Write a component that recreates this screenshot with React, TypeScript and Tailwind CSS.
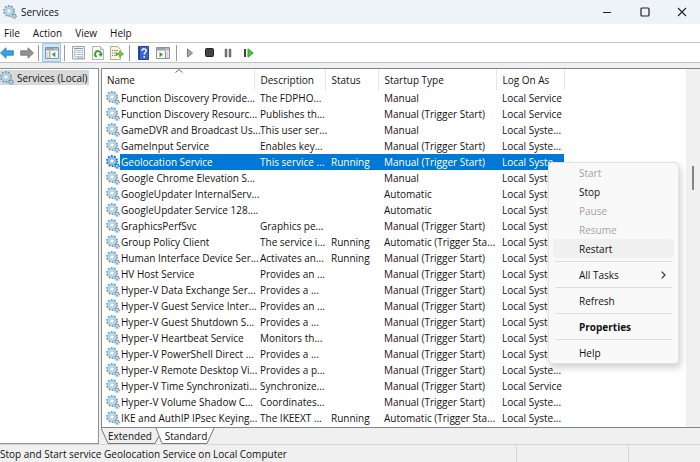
import { ReactNode } from "react";

type Service = {
  name: string;
  description?: string;
  running?: boolean;
  startup: string;
  logOn: string;
};

const TRIGGER = "Manual (Trigger Start)";
const AUTO_TRIGGER = "Automatic (Trigger Sta...";
const SYSTEM = "Local Syste...";
const LOCAL = "Local Service";

const services: Service[] = [
  { name: "Function Discovery Provide...", description: "The FDPHO...", startup: "Manual", logOn: LOCAL },
  { name: "Function Discovery Resourc...", description: "Publishes th...", startup: TRIGGER, logOn: LOCAL },
  { name: "GameDVR and Broadcast Us...", description: "This user ser...", startup: "Manual", logOn: SYSTEM },
  { name: "GameInput Service", description: "Enables key...", startup: TRIGGER, logOn: SYSTEM },
  { name: "Geolocation Service", description: "This service ...", running: true, startup: TRIGGER, logOn: SYSTEM },
  { name: "Google Chrome Elevation S...", startup: "Manual", logOn: SYSTEM },
  { name: "GoogleUpdater InternalServ...", startup: "Automatic", logOn: SYSTEM },
  { name: "GoogleUpdater Service 128....", startup: "Automatic", logOn: SYSTEM },
  { name: "GraphicsPerfSvc", description: "Graphics pe...", startup: TRIGGER, logOn: SYSTEM },
  { name: "Group Policy Client", description: "The service i...", running: true, startup: AUTO_TRIGGER, logOn: SYSTEM },
  { name: "Human Interface Device Ser...", description: "Activates an...", running: true, startup: TRIGGER, logOn: SYSTEM },
  { name: "HV Host Service", description: "Provides an ...", startup: TRIGGER, logOn: SYSTEM },
  { name: "Hyper-V Data Exchange Ser...", description: "Provides a ...", startup: TRIGGER, logOn: SYSTEM },
  { name: "Hyper-V Guest Service Inter...", description: "Provides an ...", startup: TRIGGER, logOn: SYSTEM },
  { name: "Hyper-V Guest Shutdown S...", description: "Provides a ...", startup: TRIGGER, logOn: SYSTEM },
  { name: "Hyper-V Heartbeat Service", description: "Monitors th...", startup: TRIGGER, logOn: SYSTEM },
  { name: "Hyper-V PowerShell Direct ...", description: "Provides a ...", startup: TRIGGER, logOn: SYSTEM },
  { name: "Hyper-V Remote Desktop Vi...", description: "Provides a p...", startup: TRIGGER, logOn: SYSTEM },
  { name: "Hyper-V Time Synchronizati...", description: "Synchronize...", startup: TRIGGER, logOn: LOCAL },
  { name: "Hyper-V Volume Shadow C...", description: "Coordinates...", startup: TRIGGER, logOn: SYSTEM },
  { name: "IKE and AuthIP IPsec Keying...", description: "The IKEEXT ...", running: true, startup: AUTO_TRIGGER, logOn: SYSTEM },
];

const SELECTED = "Geolocation Service";

function GearIcon({ selected = false }: { selected?: boolean }) {
  const rim = selected ? "#0f6fc0" : "#7198b4";
  const face = selected ? "#8cc4f0" : "#b9dcf0";
  return (
    <svg viewBox="0 0 14 14" className="block size-[14px] shrink-0">
      <circle cx="6" cy="6" r="5" fill="none" stroke={rim} strokeWidth="2" strokeDasharray="1.6 1.54" />
      <circle cx="6" cy="6" r="3.6" fill="none" stroke={face} strokeWidth="2" />
      <circle cx="6" cy="6" r="4.5" fill="none" stroke={rim} strokeWidth="0.5" />
      <circle cx="6" cy="6" r="2.3" fill="#fff" stroke={rim} strokeWidth="0.6" />
      <circle cx="11" cy="11" r="2.3" fill="none" stroke={rim} strokeWidth="1.2" strokeDasharray="1 0.8" />
      <circle cx="11" cy="11" r="1.5" fill="#e6f2f9" stroke={rim} strokeWidth="0.9" />
    </svg>
  );
}

function Arrow({ left = false }: { left?: boolean }) {
  return (
    <svg viewBox="0 0 14 12" className="block h-3 w-[14px]">
      {left ? (
        <path d="M.5 6 6 .8v3h7.3v4.4H6v3z" fill="#36a3e6" stroke="#1c78b8" strokeWidth=".8" />
      ) : (
        <path d="M13.5 6 8 .8v3H.7v4.4H8v3z" fill="#929292" stroke="#707070" strokeWidth=".8" />
      )}
    </svg>
  );
}

function PaneIcon({ right = false }: { right?: boolean }) {
  return (
    <svg viewBox="0 0 14 12" className="block h-3 w-[14px]">
      <path d="M.5.5h13v11H.5z" fill="#f8f8f8" stroke="#8b9299" />
      <path d="M1 1h12v2.5H1z" fill="#9ba3ab" />
      <path d="M9.5 2h1M11.5 2h1" stroke="#fff" />
      {right ? (
        <>
          <path d="M9.5 4v7.5" stroke="#8b9299" />
          <path d="M3.5 5v5.2L7 7.6z" fill="#35a52b" />
          <path d="M10.5 6h2M10.5 8h2M10.5 10h2" stroke="#9ba3ab" strokeWidth=".8" />
        </>
      ) : (
        <>
          <path d="M4.8 4v7.5" stroke="#8b9299" />
          <path d="M10.3 5v5.2L6.8 7.6z" fill="#35a52b" />
          <path d="M1.5 6h2M1.5 8h2M1.5 10h2" stroke="#9ba3ab" strokeWidth=".8" />
        </>
      )}
    </svg>
  );
}

function PropertiesIcon() {
  return (
    <svg viewBox="0 0 13 14" className="block h-[14px] w-[13px]">
      <path d="M.5.5h12v12.500H.5z" fill="#eef1f3" stroke="#9fa6ab" />
      <path d="M2 2.500h9" stroke="#7d9db3" />
      <path d="M2.500 4.500h8v6h-8z" fill="#fff" stroke="#a7b4bd" strokeWidth=".7" />
      <path d="M3.500 6.200h1M3.500 8.500h1" stroke="#3a9cd4" />
      <path d="M5.500 6.200h4M5.500 8.500h4" stroke="#8c9aa5" strokeWidth=".8" />
      <path d="M5 12h2.500M8.500 12H11" stroke="#5f9fca" />
    </svg>
  );
}

function RefreshIcon() {
  return (
    <svg viewBox="0 0 12 14" className="block h-[14px] w-3">
      <path d="M.5.5h8l3 3v10H.5z" fill="#fafafa" stroke="#b3b3b3" />
      <path d="M8.5.5v3h3" fill="#e9e9e9" stroke="#b3b3b3" />
      <path d="M4.800 10.800A3 3 0 1 1 9 8.200" fill="none" stroke="#34a52f" strokeWidth="1.800" />
      <path d="M10.900 7.600 9 11 6.400 8.300z" fill="#34a52f" />
    </svg>
  );
}

function ExportIcon() {
  return (
    <svg viewBox="0 0 14 14" className="block size-[14px]">
      <path d="M.5.5h7l3 3v10H.5z" fill="#fbf6dc" stroke="#b7af8b" />
      <path d="M2 4.5h1M2 7h1M2 9.5h1" stroke="#85785a" />
      <path d="M4 4.5h4M4 7h3M4 9.5h3" stroke="#a29c86" />
      <path d="M6 7h3.5V4.8L13.7 8l-4.2 3.2V9H6z" fill="#6cc943" stroke="#43982b" strokeWidth=".5" />
    </svg>
  );
}

function HelpIcon() {
  return (
    <svg viewBox="0 0 11 14" className="block h-[14px] w-[11px]">
      <path d="M.5.5h10v13H.5z" fill="#3d64cf" stroke="#2447a5" />
      <path d="M1.5 1v12" stroke="#243f90" />
      <path d="M4 5c0-3 4.600-2.800 4.200 0C8 6.500 6.200 6.600 6.200 8.500M6.200 10v1.700" fill="none" stroke="#fff" strokeWidth="1.400" />
    </svg>
  );
}

function ToolButton({ label, className = "w-5", children }: { label: string; className?: string; children: ReactNode }) {
  return (
    <button aria-label={label} className={`flex h-[19px] shrink-0 items-center justify-center ${className}`}>
      {children}
    </button>
  );
}

function Divider() {
  return <span className="mx-[3px] h-4 w-px shrink-0 bg-[#999]" />;
}

function TitleBar() {
  return (
    <header className="flex h-6 items-center bg-[#eef3f9]">
      <div className="flex flex-1 items-center gap-1 pl-[3px]">
        <GearIcon />
        <h1>Services</h1>
      </div>
      <button aria-label="Minimize" className="flex h-6 w-[38px] items-center justify-center">
        <svg viewBox="0 0 10 10" className="size-[10px]"><path d="M1 5.500h8" stroke="#222" /></svg>
      </button>
      <button aria-label="Maximize" className="flex h-6 w-[38px] items-center justify-center">
        <svg viewBox="0 0 10 10" className="size-[10px]"><rect x="1" y="1" width="8" height="8" rx="1" fill="none" stroke="#222" strokeWidth="1.200" /></svg>
      </button>
      <button aria-label="Close" className="flex h-6 w-9 items-center justify-center">
        <svg viewBox="0 0 10 10" className="size-[10px]"><path d="m1 1 8 8M9 1 1 9" stroke="#222" strokeWidth="1.100" /></svg>
      </button>
    </header>
  );
}

function Toolbar() {
  return (
    <div className="flex h-[21px] items-center border-y border-[#c4c4c4] bg-white">
      <ToolButton label="Back" className="w-[14px]"><Arrow left /></ToolButton>
      <ToolButton label="Forward" className="ml-1 w-[17px]"><Arrow /></ToolButton>
      <Divider />
      <ToolButton label="Show/Hide Console Tree" className="w-[19px] rounded-[1px] border border-[#90c8f6] bg-[#cce8ff]"><PaneIcon /></ToolButton>
      <Divider />
      <ToolButton label="Properties"><PropertiesIcon /></ToolButton>
      <ToolButton label="Refresh"><RefreshIcon /></ToolButton>
      <ToolButton label="Export List" className="w-[18px]"><ExportIcon /></ToolButton>
      <Divider />
      <ToolButton label="Help"><HelpIcon /></ToolButton>
      <ToolButton label="Show/Hide Action Pane"><PaneIcon right /></ToolButton>
      <Divider />
      <ToolButton label="Start Service">
        <svg viewBox="0 0 8 10" className="h-[10px] w-2"><path d="M1.500 1v8l5-4z" fill="#aaa" stroke="#777" /></svg>
      </ToolButton>
      <ToolButton label="Stop Service" className="w-[18px]">
        <svg viewBox="0 0 9 9" className="size-[9px]"><rect x=".5" y=".5" width="8" height="8" rx="1" fill="#444" stroke="#222" /></svg>
      </ToolButton>
      <ToolButton label="Pause Service">
        <svg viewBox="0 0 8 10" className="h-[10px] w-2"><path d="M1 1h2v8H1zM5 1h2v8H5z" fill="#777" stroke="#666" strokeWidth=".5" /></svg>
      </ToolButton>
      <ToolButton label="Restart Service">
        <svg viewBox="0 0 11 10" className="h-[10px] w-[11px]">
          <path d="M1 1h2v8H1z" fill="#444" />
          <path d="M5 .8v8.400L10 5z" fill="#43cf2f" stroke="#27a51a" />
        </svg>
      </ToolButton>
    </div>
  );
}

function ServiceTable() {
  return (
    <table className="w-[462px] table-fixed border-collapse whitespace-nowrap text-left">
      <colgroup>
        <col className="w-[18px]" />
        <col className="w-[134px]" />
        <col className="w-[71px]" />
        <col className="w-[53px]" />
        <col className="w-[118px]" />
        <col className="w-[68px]" />
      </colgroup>
      <thead>
        <tr className="h-[21px]">
          <th colSpan={2} className="relative border-r border-[#e5e5e5] p-0 pl-[5px] font-normal">
            Name
            <svg viewBox="0 0 8 4" className="absolute left-[73px] top-0 h-1 w-2"><path d="M.5 3.500 4 .5l3.500 3" fill="none" stroke="#666" /></svg>
          </th>
          <th className="border-r border-[#e5e5e5] p-0 pl-[6px] font-normal">Description</th>
          <th className="border-r border-[#e5e5e5] p-0 pl-[6px] font-normal">Status</th>
          <th className="border-r border-[#e5e5e5] p-0 pl-[6px] font-normal">Startup Type</th>
          <th className="border-r border-[#e5e5e5] p-0 pl-[6px] font-normal">Log On As</th>
        </tr>
      </thead>
      <tbody>
        {services.map((s) => {
          const selected = s.name === SELECTED;
          const cell = selected ? "bg-[#0078d7] p-0 pl-[6px] text-white" : "p-0 pl-[6px]";
          return (
            <tr key={s.name} className="h-4">
              <td className="p-0 pl-1"><GearIcon selected={selected} /></td>
              <td className={selected ? "bg-[#0078d7] p-0 pl-px text-white" : "p-0 pl-px"}>{s.name}</td>
              <td className={cell}>{s.description}</td>
              <td className={cell}>{s.running && "Running"}</td>
              <td className={cell}>{s.startup}</td>
              <td className={cell}>{s.logOn}</td>
            </tr>
          );
        })}
      </tbody>
    </table>
  );
}

function MenuItem({ label, disabled, active, bold, submenu }: { label: string; disabled?: boolean; active?: boolean; bold?: boolean; submenu?: boolean }) {
  return (
    <button
      role="menuitem"
      disabled={disabled}
      className={`flex h-[19px] w-full items-center justify-between rounded-[3px] pl-[26px] pr-2 ${disabled ? "text-[#a3a3a3]" : "text-[#111]"} ${active ? "bg-[#f0f0f0]" : ""} ${bold ? "font-bold" : ""}`}
    >
      {label}
      {submenu && (
        <svg viewBox="0 0 5 8" className="h-2 w-[5px]"><path d="m.7.7 3.300 3.300L.7 7.300" fill="none" stroke="#333" strokeWidth="1.200" /></svg>
      )}
    </button>
  );
}

function MenuLine() {
  return <div role="separator" className="mx-[2px] my-[3px] h-px bg-[#dedede]" />;
}

function ContextMenu() {
  return (
    <div role="menu" className="absolute left-[548px] top-[162px] w-[131px] rounded-[4px] border border-[#e2e2e2] bg-[#f9f9f9] px-1 pb-px shadow-[2px_4px_7px_rgba(0,0,0,0.18)]">
      <MenuItem label="Start" disabled />
      <MenuItem label="Stop" />
      <MenuItem label="Pause" disabled />
      <MenuItem label="Resume" disabled />
      <MenuItem label="Restart" active />
      <MenuLine />
      <MenuItem label="All Tasks" submenu />
      <MenuLine />
      <MenuItem label="Refresh" />
      <MenuLine />
      <MenuItem label="Properties" bold />
      <MenuLine />
      <MenuItem label="Help" />
    </div>
  );
}

function ViewTabs() {
  return (
    <div role="tablist" className="flex h-4">
      <button role="tab" aria-selected="false" className="relative flex h-4 w-[58px] items-center justify-center">
        <svg viewBox="0 0 58 16" className="absolute inset-0"><path d="m0 0 7 15.500h47L58 8" fill="none" stroke="#777" /></svg>
        <span className="relative">Extended</span>
      </button>
      <button role="tab" aria-selected="true" className="relative flex h-4 w-[54px] items-center justify-center">
        <svg viewBox="0 0 54 16" className="absolute inset-0 overflow-visible"><path d="m-3 0 6 15.500h45L55 0" fill="#fff" stroke="#777" /></svg>
        <span className="relative">Standard</span>
      </button>
    </div>
  );
}

export default function App() {
  return (
    <div className="relative flex min-h-screen flex-col overflow-hidden bg-[#f0f0f0] font-['Open_Sans','Noto_Sans',sans-serif] text-[10px] leading-4 text-[#111]">
      <TitleBar />
      <nav className="flex h-[18px] items-center gap-[13px] bg-white pl-1">
        <button>File</button>
        <button>Action</button>
        <button>View</button>
        <button>Help</button>
      </nav>
      <Toolbar />
      <div className="flex flex-1 gap-[2px] pt-[5px]">
        <aside className="w-[99px] shrink-0 border-y border-r border-[#8e929b] bg-white pt-px">
          <a href="#services" className="flex h-[15px] w-[89px] items-center gap-[3px] bg-[#d9d9d9]">
            <GearIcon />
            Services (Local)
          </a>
        </aside>
        <main className="flex min-w-0 flex-1 flex-col">
          <div className="flex flex-1 border-y border-l border-[#82868f] bg-white">
            <div className="flex-1"><ServiceTable /></div>
            <div className="w-[14px] bg-[#f0f0f0] pl-[6px] pt-[97px]">
              <div className="h-6 w-[2px] bg-[#858585]" />
            </div>
          </div>
          <ViewTabs />
        </main>
      </div>
      <footer className="flex h-[18px] items-center border-t border-[#d7d7d7]">
        <span className="flex-1">Stop and Start service Geolocation Service on Local Computer</span>
        <span className="h-full w-28 border-l border-[#d7d7d7]" />
        <span className="h-full w-[72px] border-l border-[#d7d7d7]" />
      </footer>
      <ContextMenu />
    </div>
  );
}
